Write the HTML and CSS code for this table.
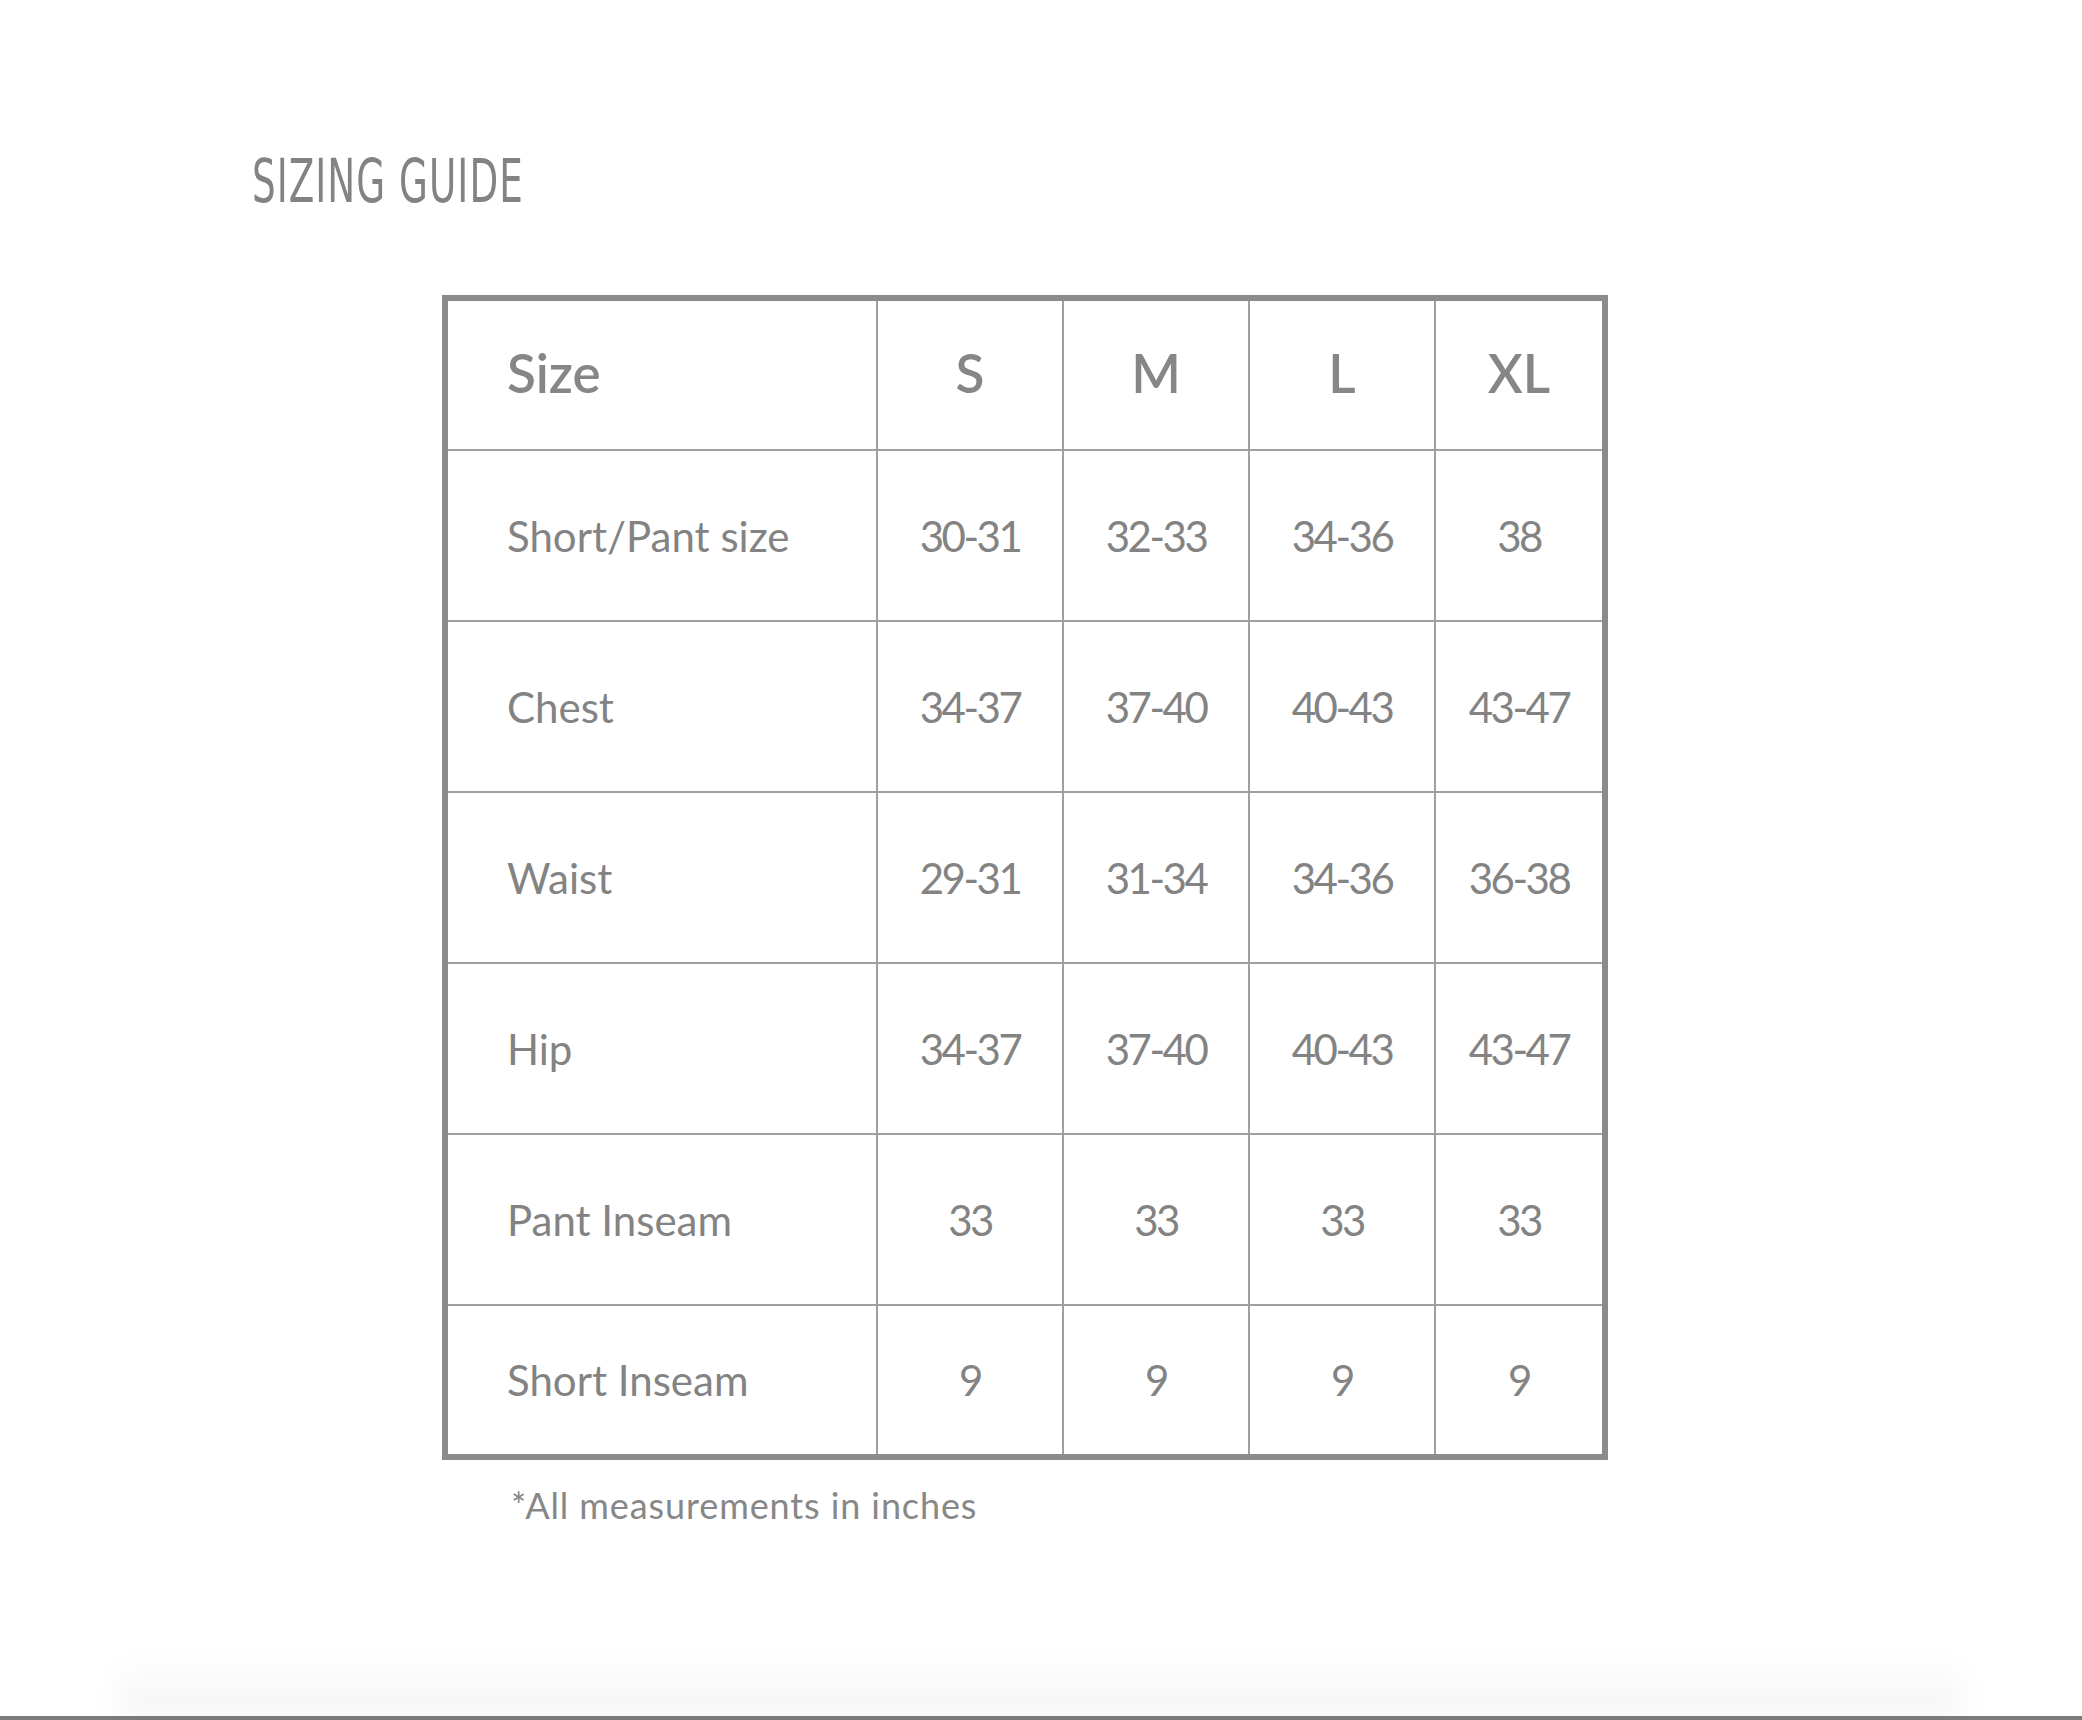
FILE: index.html
```html
<!DOCTYPE html>
<html lang="en">
<head>
<meta charset="utf-8">
<title>Sizing Guide</title>
<link rel="stylesheet" href="styles.css">
</head>
<body>
<div class="page">
  <main class="content">
    <h1 class="title">SIZING GUIDE</h1>
    <section class="chart">
      <div class="grid">
        <div class="cell label head">Size</div>
        <div class="cell head">S</div>
        <div class="cell head">M</div>
        <div class="cell head">L</div>
        <div class="cell head">XL</div>

        <div class="cell label">Short/Pant size</div>
        <div class="cell num">30-31</div>
        <div class="cell num">32-33</div>
        <div class="cell num">34-36</div>
        <div class="cell num">38</div>

        <div class="cell label">Chest</div>
        <div class="cell num">34-37</div>
        <div class="cell num">37-40</div>
        <div class="cell num">40-43</div>
        <div class="cell num">43-47</div>

        <div class="cell label">Waist</div>
        <div class="cell num">29-31</div>
        <div class="cell num">31-34</div>
        <div class="cell num">34-36</div>
        <div class="cell num">36-38</div>

        <div class="cell label">Hip</div>
        <div class="cell num">34-37</div>
        <div class="cell num">37-40</div>
        <div class="cell num">40-43</div>
        <div class="cell num">43-47</div>

        <div class="cell label">Pant Inseam</div>
        <div class="cell num">33</div>
        <div class="cell num">33</div>
        <div class="cell num">33</div>
        <div class="cell num">33</div>

        <div class="cell label">Short Inseam</div>
        <div class="cell num">9</div>
        <div class="cell num">9</div>
        <div class="cell num">9</div>
        <div class="cell num">9</div>
      </div>
      <p class="note">*All measurements in inches</p>
    </section>
  </main>
  <footer class="footer">
    <div class="shade"></div>
    <div class="rule"></div>
  </footer>
</div>
</body>
</html>
```

FILE: styles.css
```css
* {
  box-sizing: border-box;
}

html, body {
  margin: 0;
  padding: 0;
  background: #ffffff;
}

body {
  font-family: Lato, "Open Sans", "Noto Sans", sans-serif;
  color: #858585;
}

.page {
  height: 1720px;
  display: flex;
  flex-direction: column;
  overflow: hidden;
}

.content {
  flex: 1;
  padding-top: 150px;
}

.title {
  margin: 0 0 84px 252px;
  font-family: "Liberation Sans Narrow", "DejaVu Sans Condensed", "Liberation Sans", sans-serif;
  font-weight: 400;
  font-size: 61px;
  line-height: 61px;
  height: 61px;
  letter-spacing: 1.5px;
  color: #838383;
  transform: scaleX(0.68);
  transform-origin: left center;
  white-space: nowrap;
}

.chart {
  margin-left: 442px;
  width: 1166px;
}

.grid {
  display: grid;
  grid-template-columns: 428px 184px 184px 184px 166px;
  grid-template-rows: 148px repeat(5, 169px) 148px;
  gap: 2px;
  background: #9f9f9f;
  border: 6px solid #8b8b8b;
}

.cell {
  background: #ffffff;
  display: flex;
  align-items: center;
  justify-content: center;
  font-size: 42px;
  color: #838383;
  white-space: nowrap;
}

.cell.label {
  justify-content: flex-start;
  padding-left: 59px;
}

.cell.head {
  font-size: 53px;
  font-weight: 600;
  color: #868686;
  padding-bottom: 6px;
}

.cell.label.head {
  padding-bottom: 6px;
}

.cell.num {
  letter-spacing: -2.5px;
}

.note {
  margin: 24px 0 0 69px;
  font-size: 36px;
  line-height: 42px;
  letter-spacing: 0.9px;
  color: #878787;
}

.footer {
  position: relative;
  height: 70px;
  display: flex;
  flex-direction: column;
  justify-content: flex-end;
}

.shade {
  height: 56px;
  margin: 0 120px;
  background: linear-gradient(to bottom, rgba(0, 0, 0, 0), rgba(0, 0, 0, 0.05));
  filter: blur(14px);
}

.rule {
  height: 4px;
  background: #7b7b7b;
  position: relative;
}
```
